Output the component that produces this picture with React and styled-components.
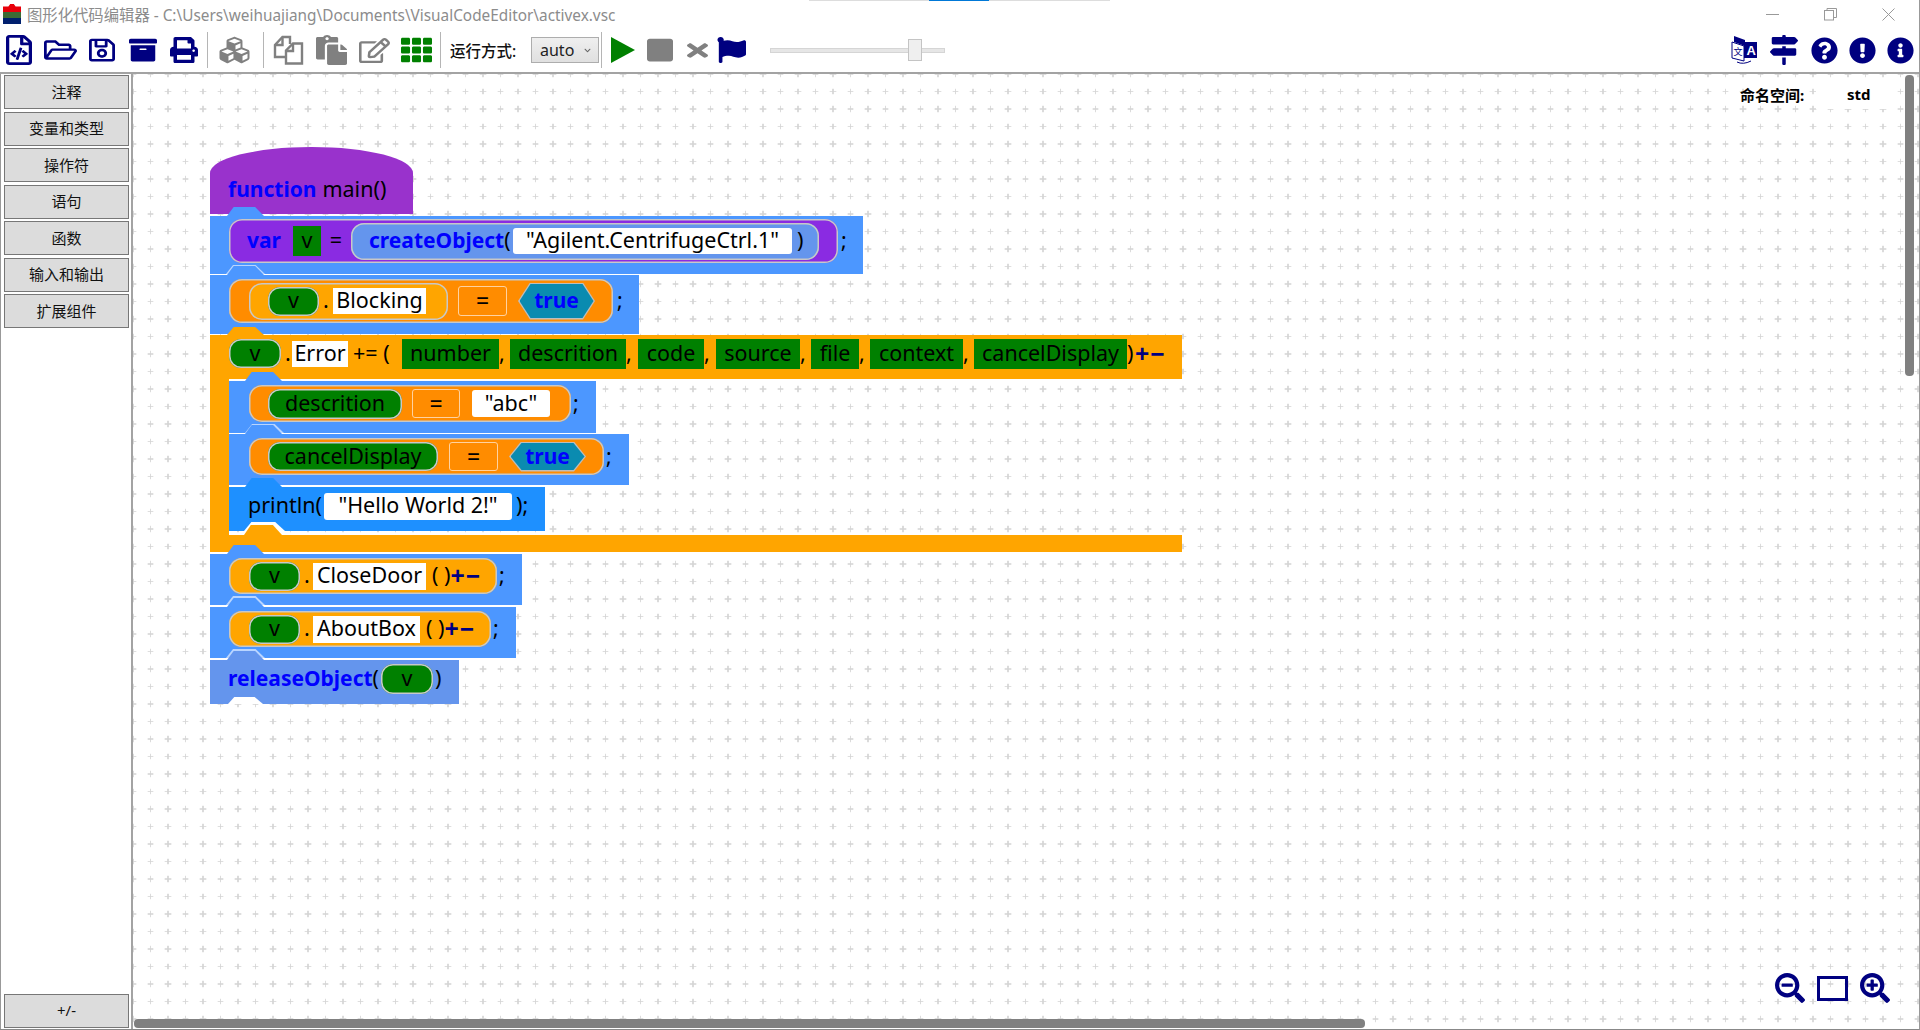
import React from "react";
import styled, { createGlobalStyle } from "styled-components";
import {
  FaRegFileCode,
  FaRegFolderOpen,
  FaRegSave,
  FaArchive,
  FaPrint,
  FaCubes,
  FaPaste,
  FaRegEdit,
  FaTh,
  FaStop,
  FaTimes,
  FaFlag,
  FaMapSigns,
  FaQuestionCircle,
  FaExclamationCircle,
  FaInfoCircle,
  FaSearchMinus,
  FaSearchPlus,
  FaChevronDown,
} from "react-icons/fa";

const NAVY = "#000080";
const GRAY = "#808080";
const BLUE = "#4c97ff";
const ORANGE = "#ffa500";
const DARK_ORANGE = "#ff8c00";
const FONT = `"Noto Sans", "Noto Sans CJK SC", sans-serif`;

const GlobalStyle = createGlobalStyle`
  html, body {
    margin: 0;
    padding: 0;
    background: #fff;
    font-family: ${FONT};
  }
  * {
    box-sizing: border-box;
  }
`;

function FilesIcon(props) {
  return (
    <svg viewBox="0 0 31 30" fill="none" stroke={GRAY} strokeWidth="2.4" {...props}>
      <path d="M12 22H2V10L9.5 2H17V9" />
      <path d="M9.5 2V10H2" />
      <path d="M13 28.5V15.500L20 8.500H29V28.500Z" />
      <path d="M20 8.500V16H13" />
    </svg>
  );
}

function PlayIcon(props) {
  return (
    <svg viewBox="0 0 24 26" {...props}>
      <path d="M0 0L24 13L0 26Z" fill="currentColor" />
    </svg>
  );
}

function LanguageIcon(props) {
  return (
    <svg viewBox="0 0 27 30" {...props}>
      <path d="M1 7L13 11V26L1 23Z" fill="#fff" stroke={NAVY} strokeWidth="1" />
      <path d="M3 1L14 5V11L3 7Z" fill={NAVY} />
      <path d="M13 7H26V23H13Z" fill={NAVY} />
      <text x="15.500" y="20" fontSize="13" fontWeight="700" fill="#fff" fontFamily="Liberation Sans, sans-serif">
        A
      </text>
      <text x="2.500" y="20" fontSize="9" fill={NAVY} fontFamily="Noto Sans CJK SC, sans-serif">
        文
      </text>
      <path d="M6 27Q12 30 20 26" fill="none" stroke={NAVY} strokeWidth="1" />
    </svg>
  );
}

const leftTools = [
  { Icon: FaRegFileCode, w: 26, h: 30, ml: 6, color: NAVY },
  { Icon: FaRegFolderOpen, w: 33, h: 26, ml: 12, color: NAVY },
  { Icon: FaRegSave, w: 26, h: 26, ml: 12, color: NAVY },
  { Icon: FaArchive, w: 28, h: 26, ml: 14, color: NAVY },
  { Icon: FaPrint, w: 28, h: 26, ml: 13, color: NAVY },
];

const editTools = [
  { Icon: FilesIcon, w: 31, h: 30, ml: 9, color: GRAY },
  { Icon: FaPaste, w: 31, h: 30, ml: 12, color: GRAY },
  { Icon: FaRegEdit, w: 31, h: 25, ml: 12, color: GRAY },
  { Icon: FaTh, w: 31, h: 28, ml: 11, color: "#008000" },
];

const runTools = [
  { Icon: PlayIcon, w: 24, h: 26, ml: 9, color: "#008000" },
  { Icon: FaStop, w: 26, h: 26, ml: 12, color: GRAY },
  { Icon: FaTimes, w: 21, h: 21, ml: 14, color: GRAY },
  { Icon: FaFlag, w: 29, h: 26, ml: 9, color: NAVY },
];

const rightTools = [
  { Icon: LanguageIcon, w: 27, h: 30, ml: 0, color: NAVY },
  { Icon: FaMapSigns, w: 28, h: 30, ml: 12, color: NAVY },
  { Icon: FaQuestionCircle, w: 27, h: 27, ml: 13, color: NAVY },
  { Icon: FaExclamationCircle, w: 27, h: 27, ml: 11, color: NAVY },
  { Icon: FaInfoCircle, w: 27, h: 27, ml: 11, color: NAVY },
];

const categories = ["注释", "变量和类型", "操作符", "语句", "函数", "输入和输出", "扩展组件"];

function ToolGroup({ tools }) {
  return tools.map(({ Icon, w, h, ml, color }, i) => (
    <ToolIcon key={i} $w={w} $h={h} $ml={ml} $color={color}>
      <Icon preserveAspectRatio="none" />
    </ToolIcon>
  ));
}

function Var({ w = 51, h = 29, ml, children }) {
  return (
    <Pill $w={w} $h={h} $ml={ml} $bg="#008000" $r={12}>
      <Tok>{children}</Tok>
    </Pill>
  );
}

function App() {
  return (
    <Window>
      <GlobalStyle />
      <TabStrip />
      <TitleBar>
        <AppLogo />
        <TitleText>图形化代码编辑器 - C:\Users\weihuajiang\Documents\VisualCodeEditor\activex.vsc</TitleText>
        <WinControls>
          <WinButton>
            <svg width="13" height="13" viewBox="0 0 13 13" stroke="#999" fill="none">
              <path d="M0 6.500H13" />
            </svg>
          </WinButton>
          <WinButton>
            <svg width="13" height="13" viewBox="0 0 13 13" stroke="#999" fill="none">
              <rect x="0.500" y="2.500" width="9" height="9.500" />
              <path d="M3 2.500V0.500H12.500V9.500H9.500" />
            </svg>
          </WinButton>
          <WinButton>
            <svg width="13" height="13" viewBox="0 0 13 13" stroke="#999" fill="none">
              <path d="M0.500 0.500L12.500 12.500M12.500 0.500L0.500 12.500" />
            </svg>
          </WinButton>
        </WinControls>
      </TitleBar>

      <Toolbar>
        <ToolGroup tools={leftTools} />
        <Divider $ml={9} />
        <ToolIcon $w={37} $h={30} $ml={8} $color={GRAY}>
          <FaCubes />
        </ToolIcon>
        <Divider $ml={10} />
        <ToolGroup tools={editTools} />
        <Divider $ml={8} />
        <RunLabel>运行方式:</RunLabel>
        <RunSelect>
          auto
          <FaChevronDown />
        </RunSelect>
        <Divider $ml={2} />
        <ToolGroup tools={runTools} />
        <SliderTrack>
          <SliderThumb />
        </SliderTrack>
        <RightTools>
          <ToolGroup tools={rightTools} />
        </RightTools>
      </Toolbar>

      <Main>
        <Sidebar>
          <CategoryList>
            {categories.map((c) => (
              <CategoryButton key={c}>{c}</CategoryButton>
            ))}
          </CategoryList>
          <CategoryButton>+/-</CategoryButton>
        </Sidebar>

        <Canvas>
          <Program>
            <FunctionHead>
              <Tok $bold $color="#0000ff">
                function
              </Tok>
              <Tok $ml={6}>main()</Tok>
            </FunctionHead>

            <Statement $w={653} $h={58} $pt={3} $mt={2} $outline>
              <Row>
                <Pill $w={609} $h={44} $bg="#8a2be2" $pl={18}>
                  <Tok $w={46} $bold $color="#0000ff">
                    var
                  </Tok>
                  <Slot $w={28} $h={30} $bg="#008000">
                    <Tok>v</Tok>
                  </Slot>
                  <Tok $w={30} $center>
                    =
                  </Tok>
                  <Pill $w={468} $h={37} $bg="#6495ed" $pl={18}>
                    <Tok $w={144} $bold $color="#0000ff">
                      createObject<Plain>(</Plain>
                    </Tok>
                    <Slot $w={279} $h={26} $bg="#fff" $r={3}>
                      <Tok>"Agilent.CentrifugeCtrl.1"</Tok>
                    </Slot>
                    <Tok $ml={5}>)</Tok>
                  </Pill>
                </Pill>
                <Tok $ml={3}>;</Tok>
              </Row>
            </Statement>

            <Statement $w={429} $h={59} $pt={4} $mt={1} $bump={BLUE}>
              <Row>
                <Pill $w={384} $h={44} $bg={DARK_ORANGE} $pl={20}>
                  <Pill $w={199} $h={37} $bg={ORANGE} $pl={19}>
                    <Var>v</Var>
                    <Tok $w={14} $ml={4}>
                      .
                    </Tok>
                    <Slot $w={93} $h={26} $bg="#fff" $ml={-4}>
                      <Tok>Blocking</Tok>
                    </Slot>
                  </Pill>
                  <Operator $ml={10} $w={49} $h={30}>
                    =
                  </Operator>
                  <Hex $ml={11} $w={77} $h={37}>
                    <Tok $bold $color="#0000ff">
                      true
                    </Tok>
                  </Hex>
                </Pill>
                <Tok $ml={4}>;</Tok>
              </Row>
            </Statement>

            <Loop>
              <LoopHead>
                <Var w={52}>v</Var>
                <Tok $w={11} $ml={4}>
                  .
                </Tok>
                <Slot $w={56} $h={26} $bg="#fff" $ml={-4}>
                  <Tok>Error</Tok>
                </Slot>
                <Tok $w={54} $pl={5}>
                  += (
                </Tok>
                <Param $w={97}>number</Param>
                <Comma $w={11} />
                <Param $w={116}>descrition</Param>
                <Comma $w={12} />
                <Param $w={66}>code</Param>
                <Comma $w={12} />
                <Param $w={84}>source</Param>
                <Comma $w={11} />
                <Param $w={48}>file</Param>
                <Comma $w={11} />
                <Param $w={93}>context</Param>
                <Comma $w={11} />
                <Param $w={153}>cancelDisplay</Param>
                <Tok $w={8}>)</Tok>
                <Toggle>+−</Toggle>
              </LoopHead>

              <LoopBody>
                <Statement $w={367} $h={52} $pt={4} $pl={20} $bumpLeft={16} $outline>
                  <Row>
                    <Pill $w={322} $h={37} $bg={DARK_ORANGE} $pl={19}>
                      <Var w={134} h={30}>
                        descrition
                      </Var>
                      <Operator $ml={10} $w={48} $h={29}>
                        =
                      </Operator>
                      <Slot $w={78} $h={27} $bg="#fff" $r={3} $ml={12}>
                        <Tok>"abc"</Tok>
                      </Slot>
                    </Pill>
                    <Tok $ml={2}>;</Tok>
                  </Row>
                </Statement>

                <Statement $w={400} $h={51} $pt={4} $pl={20} $mt={1} $bumpLeft={16}>
                  <Row>
                    <Pill $w={355} $h={37} $bg={DARK_ORANGE} $pl={19}>
                      <Var w={170}>cancelDisplay</Var>
                      <Operator $ml={11} $w={49} $h={29}>
                        =
                      </Operator>
                      <Hex $ml={11} $w={77} $h={30}>
                        <Tok $bold $color="#0000ff">
                          true
                        </Tok>
                      </Hex>
                    </Pill>
                    <Tok $ml={2}>;</Tok>
                  </Row>
                </Statement>

                <Statement $w={316} $h={44} $pt={5} $pl={19} $mt={2} $bg="#1e90ff" $bumpLeft={16} $notch="println">
                  <Row>
                    <Tok $w={76}>println(</Tok>
                    <Slot $w={188} $h={27} $bg="#fff" $r={3}>
                      <Tok>"Hello World 2!"</Tok>
                    </Slot>
                    <Tok $ml={4}>);</Tok>
                  </Row>
                </Statement>
              </LoopBody>
              <LoopFoot />
            </Loop>

            <Statement $w={312} $h={51} $pt={4} $mt={2} $outline>
              <Row>
                <Pill $w={268} $h={36} $bg={ORANGE} $pl={20}>
                  <Var>v</Var>
                  <Tok $w={13} $ml={4}>
                    .
                  </Tok>
                  <Slot $w={113} $h={27} $bg="#fff" $ml={-4}>
                    <Tok>CloseDoor</Tok>
                  </Slot>
                  <Tok $w={24} $pl={6}>
                    ( )
                  </Tok>
                  <Toggle>+−</Toggle>
                </Pill>
                <Tok $ml={2}>;</Tok>
              </Row>
            </Statement>

            <Statement $w={306} $h={51} $pt={4} $mt={2} $outline>
              <Row>
                <Pill $w={262} $h={36} $bg={ORANGE} $pl={20}>
                  <Var>v</Var>
                  <Tok $w={13} $ml={4}>
                    .
                  </Tok>
                  <Slot $w={107} $h={27} $bg="#fff" $ml={-4}>
                    <Tok>AboutBox</Tok>
                  </Slot>
                  <Tok $w={24} $pl={6}>
                    ( )
                  </Tok>
                  <Toggle>+−</Toggle>
                </Pill>
                <Tok $ml={2}>;</Tok>
              </Row>
            </Statement>

            <Statement $w={249} $h={44} $pt={4} $pl={18} $mt={2} $bg="#6495ed" $bump={BLUE} $notch="end">
              <Row>
                <Tok $w={153} $bold $color="#0000ff">
                  releaseObject<Plain>(</Plain>
                </Tok>
                <Var w={52} h={30}>
                  v
                </Var>
                <Tok $ml={2}>)</Tok>
              </Row>
            </Statement>
          </Program>

          <Namespace>
            <NamespaceLabel>命名空间:</NamespaceLabel>
            <NamespaceValue>std</NamespaceValue>
          </Namespace>

          <ZoomTools>
            <ToolIcon $w={30} $h={30} $color={NAVY}>
              <FaSearchMinus />
            </ToolIcon>
            <FitBox />
            <ToolIcon $w={30} $h={30} $color={NAVY}>
              <FaSearchPlus />
            </ToolIcon>
          </ZoomTools>

          <VScroll />
          <HScroll />
        </Canvas>
      </Main>
    </Window>
  );
}

export default App;

const Window = styled.div`
  position: relative;
  width: 1920px;
  height: 1030px;
  display: flex;
  flex-direction: column;
  overflow: hidden;
  background: #fff;
  border-right: 1px solid #999;
  border-bottom: 1px solid #888;
`;

const TabStrip = styled.div`
  position: absolute;
  top: 0;
  left: 809px;
  width: 301px;
  height: 1px;
  background: linear-gradient(to right, #ddd 0 120px, #0078d7 120px 180px, #ddd 180px);
`;

const TitleBar = styled.div`
  flex: 0 0 28px;
  padding-bottom: 1px;
  display: flex;
  align-items: center;
`;

const AppLogo = styled.div`
  width: 18px;
  height: 20px;
  margin-left: 3px;
  background: linear-gradient(#e8000a 0 38%, #3d6b35 38% 68%, #00206e 68%);
  clip-path: polygon(0 12%, 30% 12%, 40% 0, 60% 0, 70% 12%, 100% 12%, 100% 100%, 0 100%);
`;

const TitleText = styled.div`
  margin-left: 6px;
  font-size: 15.35px;
  color: #8c8c8c;
  white-space: nowrap;
`;

const WinControls = styled.div`
  margin-left: auto;
  margin-right: 2px;
  display: flex;
`;

const WinButton = styled.div`
  width: 58px;
  height: 28px;
  display: flex;
  align-items: center;
  justify-content: center;
`;

const Toolbar = styled.div`
  flex: 0 0 43px;
  padding-bottom: 1px;
  display: flex;
  align-items: center;
`;

const ToolIcon = styled.div`
  flex: 0 0 ${(p) => p.$w}px;
  height: ${(p) => p.$h}px;
  margin-left: ${(p) => p.$ml || 0}px;
  color: ${(p) => p.$color};
  display: flex;
  align-items: center;
  justify-content: center;
  & svg {
    width: 100%;
    height: 100%;
  }
`;

const Divider = styled.div`
  flex: 0 0 1px;
  height: 36px;
  margin-left: ${(p) => p.$ml}px;
  background: #b5b5b5;
`;

const RunLabel = styled.div`
  margin-left: 9px;
  width: 81px;
  font-size: 15.5px;
  font-weight: 500;
  color: #111;
  white-space: nowrap;
`;

const RunSelect = styled.div`
  flex: 0 0 68px;
  height: 26px;
  padding: 0 7px 0 8px;
  display: flex;
  align-items: center;
  justify-content: space-between;
  font-size: 16px;
  color: #222;
  background: linear-gradient(#efefef, #e0e0e0);
  border: 1px solid #adadad;
  & svg {
    width: 7px;
    height: 7px;
    color: #666;
  }
`;

const SliderTrack = styled.div`
  position: relative;
  flex: 0 0 175px;
  height: 5px;
  margin-left: 24px;
  background: #e6e6e6;
  border: 1px solid #d5d5d5;
`;

const SliderThumb = styled.div`
  position: absolute;
  top: -10px;
  left: 137px;
  width: 14px;
  height: 22px;
  background: #efefef;
  border: 1px solid #c4c4c4;
`;

const RightTools = styled.div`
  margin-left: auto;
  padding-right: 5px;
  display: flex;
  align-items: center;
`;

const Main = styled.div`
  flex: 1;
  min-height: 0;
  display: flex;
  border-top: 2px solid #a3a3a3;
`;

const Sidebar = styled.div`
  flex: 0 0 133px;
  padding: 1px 2px 1px 3px;
  display: flex;
  flex-direction: column;
  justify-content: space-between;
  border-left: 1px solid #999;
  border-right: 2px solid #a3a3a3;
`;

const CategoryList = styled.div`
  display: flex;
  flex-direction: column;
  gap: 2.500px;
`;

const CategoryButton = styled.div`
  height: 34px;
  padding-bottom: 2px;
  display: flex;
  align-items: center;
  justify-content: center;
  font-size: 15px;
  color: #111;
  background: #dcdcdc;
  border: 1px solid #777;
`;

const Canvas = styled.div`
  position: relative;
  flex: 1;
  overflow: hidden;
  padding: 73px 0 0 77px;
  background-color: #fff;
  background-image: url("data:image/svg+xml,%3Csvg xmlns='http://www.w3.org/2000/svg' width='17.5' height='17.5'%3E%3Cpath d='M8.75 5.500v6.500M5.500 8.750h6.500' stroke='%23d4d4d4' stroke-width='1.6'/%3E%3C/svg%3E");
  background-size: 17.5px 17.5px;
  background-position: -8.75px -8.75px;
`;

const Program = styled.div`
  display: flex;
  flex-direction: column;
  align-items: flex-start;
`;

const Row = styled.div`
  display: flex;
  align-items: center;
`;

const Tok = styled.span`
  flex: 0 0 ${(p) => (p.$w ? `${p.$w}px` : "auto")};
  margin-left: ${(p) => p.$ml || 0}px;
  padding-left: ${(p) => p.$pl || 0}px;
  padding-bottom: 2px;
  font-size: ${(p) => (p.$bold ? 21 : 21.5)}px;
  line-height: 26px;
  font-weight: ${(p) => (p.$bold ? 700 : 400)};
  color: ${(p) => p.$color || "#000"};
  text-align: ${(p) => (p.$center ? "center" : "left")};
  white-space: nowrap;
`;

const Plain = styled.span`
  font-weight: 400;
  color: #000;
`;

const FunctionHead = styled.div`
  width: 203px;
  height: 67px;
  padding: 18px 0 0 18px;
  display: flex;
  align-items: center;
  background: #9932cc;
  border-radius: 101px 101px 0 0 / 26px 26px 0 0;
`;

const Statement = styled.div`
  position: relative;
  flex: 0 0 auto;
  width: ${(p) => p.$w}px;
  height: ${(p) => p.$h}px;
  margin-top: ${(p) => p.$mt || 0}px;
  padding: ${(p) => p.$pt}px 0 0 ${(p) => p.$pl || 19}px;
  background: ${(p) => p.$bg || BLUE};

  &::before {
    content: "";
    position: absolute;
    top: -9px;
    left: ${(p) => p.$bumpLeft || 17}px;
    width: 37px;
    height: 9px;
    background: ${(p) => p.$bg || BLUE};
    clip-path: polygon(18% 0, 76% 0, 100% 100%, 0 100%);
  }

  &::after {
    content: ${(p) => (p.$outline || p.$notch ? '""' : "none")};
    position: absolute;
    bottom: 0;
    left: ${(p) => (p.$notch === "println" ? 15 : p.$notch === "end" ? 18 : 16)}px;
    width: ${(p) => (p.$notch === "println" ? 41 : p.$notch === "end" ? 35 : 39)}px;
    height: ${(p) => (p.$notch === "end" ? 7 : 9)}px;
    background: ${(p) => (p.$notch ? "#fff" : "#b9d5ff")};
    clip-path: polygon(18% 0, 76% 0, 100% 100%, 0 100%);
  }
`;

const Pill = styled.div`
  flex: 0 0 ${(p) => p.$w}px;
  height: ${(p) => p.$h}px;
  margin-left: ${(p) => p.$ml || 0}px;
  padding-left: ${(p) => p.$pl || 0}px;
  display: flex;
  align-items: center;
  justify-content: ${(p) => (p.$pl ? "flex-start" : "center")};
  background: ${(p) => p.$bg};
  border-radius: ${(p) => p.$r || 13}px;
  box-shadow: inset 0 0 0 1.5px #c8c8c8;
`;

const Slot = styled.div`
  flex: 0 0 ${(p) => p.$w}px;
  height: ${(p) => p.$h}px;
  margin-left: ${(p) => p.$ml || 0}px;
  display: flex;
  align-items: center;
  justify-content: center;
  background: ${(p) => p.$bg};
  border-radius: ${(p) => p.$r || 0}px;
`;

const Operator = styled(Slot)`
  padding-bottom: 2px;
  font-size: 23px;
  color: #000;
  background: ${DARK_ORANGE};
  border: 1.5px solid #ffd2a0;
  border-radius: 3px;
`;

const Hex = styled.div`
  position: relative;
  flex: 0 0 ${(p) => p.$w}px;
  height: ${(p) => p.$h}px;
  margin-left: ${(p) => p.$ml || 0}px;
  display: flex;
  align-items: center;
  justify-content: center;
  background: #bdbdbd;
  clip-path: polygon(12px 0, calc(100% - 12px) 0, 100% 50%, calc(100% - 12px) 100%, 12px 100%, 0 50%);

  &::before {
    content: "";
    position: absolute;
    inset: 1.500px;
    background: #0a8bb0;
    clip-path: polygon(11px 0, calc(100% - 11px) 0, 100% 50%, calc(100% - 11px) 100%, 11px 100%, 0 50%);
  }
  & > * {
    position: relative;
  }
`;

const Toggle = styled.span`
  padding-bottom: 2px;
  font-size: 25px;
  line-height: 26px;
  font-weight: 700;
  letter-spacing: 1px;
  color: ${NAVY};
`;

const Loop = styled.div`
  position: relative;
  margin-top: 1px;
  width: 972px;
  display: flex;
  flex-direction: column;
`;

const LoopHead = styled.div`
  position: relative;
  height: 44px;
  padding: 4px 0 11px 19px;
  display: flex;
  align-items: center;
  align-self: stretch;
  background: ${ORANGE};

  &::before {
    content: "";
    position: absolute;
    top: -8px;
    left: 17px;
    width: 37px;
    height: 8px;
    background: ${ORANGE};
    clip-path: polygon(18% 0, 76% 0, 100% 100%, 0 100%);
  }
`;

const Param = styled.div`
  flex: 0 0 ${(p) => p.$w}px;
  height: 30px;
  padding-bottom: 2px;
  display: flex;
  align-items: center;
  justify-content: center;
  font-size: 21.5px;
  color: #000;
  background: #008000;
`;

const Comma = styled.span`
  flex: 0 0 ${(p) => p.$w}px;
  padding-bottom: 2px;
  font-size: 21.5px;
  color: #000;
  &::before {
    content: ",";
  }
`;

const LoopBody = styled.div`
  padding: 2px 0 4px;
  display: flex;
  flex-direction: column;
  border-left: 19px solid ${ORANGE};
`;

const LoopFoot = styled.div`
  position: relative;
  height: 17px;
  background: ${ORANGE};

  &::before {
    content: "";
    position: absolute;
    top: -10px;
    left: 34px;
    width: 38px;
    height: 10px;
    background: ${ORANGE};
    clip-path: polygon(18% 0, 76% 0, 100% 100%, 0 100%);
  }
`;

const Namespace = styled.div`
  position: absolute;
  top: 5px;
  right: 23px;
  width: 156px;
  height: 30px;
  display: flex;
  align-items: center;
  font-size: 15px;
  font-weight: 700;
  color: #000;
`;

const NamespaceLabel = styled.div`
  flex: 0 0 76px;
`;

const NamespaceValue = styled.div`
  flex: 1;
  height: 30px;
  padding-left: 31px;
  display: flex;
  align-items: center;
  background: #fff;
`;

const ZoomTools = styled.div`
  position: absolute;
  right: 29px;
  bottom: 26px;
  display: flex;
  align-items: center;
  gap: 12px;
`;

const FitBox = styled.div`
  width: 31px;
  height: 25px;
  border: 3px solid ${NAVY};
`;

const VScroll = styled.div`
  position: absolute;
  top: 1px;
  right: 5px;
  width: 9px;
  height: 301px;
  background: ${GRAY};
  border-radius: 4px;
`;

const HScroll = styled.div`
  position: absolute;
  bottom: 1px;
  left: 1px;
  width: 1231px;
  height: 9px;
  background: ${GRAY};
  border-radius: 4px;
`;
